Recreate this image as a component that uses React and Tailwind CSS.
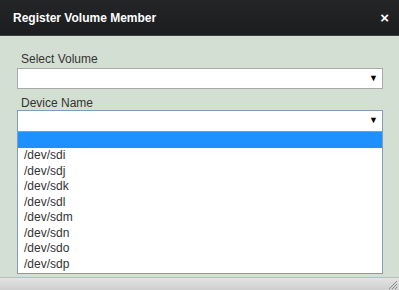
export default function App() {
  const items = ['/dev/sdi', '/dev/sdj', '/dev/sdk', '/dev/sdl', '/dev/sdm', '/dev/sdn', '/dev/sdo', '/dev/sdp'];

  return (
    <div className="w-[399px] h-[290px] overflow-hidden flex flex-col bg-[#d4dfd3] font-['Liberation_Sans',Arial,sans-serif]">
      <div className="h-[36px] shrink-0 flex items-center justify-between pl-[13px] pr-[10px] bg-gradient-to-b from-[#232527] to-[#1b1d1f] border-b border-[#3c3f41]">
        <span className="text-white font-bold text-[12px]">Register Volume Member</span>
        <span className="text-white font-bold text-[15px] leading-none">×</span>
      </div>

      <div className="flex-1 flex flex-col pl-[17px] pr-[16px] pt-[16px]">
        <label className="text-[12px] text-[#333] leading-[14px] pl-[4px]">Select Volume</label>
        <div className="mt-[2px] h-[21px] bg-white border border-[#a9a9a9] flex items-center justify-end pr-[4px]">
          <span className="text-[9px] text-black">▼</span>
        </div>

        <label className="mt-[7px] text-[12px] text-[#333] leading-[14px] pl-[4px]">Device Name</label>
        <div className="border border-[#7f9db9] bg-white">
          <div className="h-[21px] flex items-center justify-end pr-[4px] border-b border-[#7f9db9]">
            <span className="text-[9px] text-black">▼</span>
          </div>
          <div className="h-[16px] bg-[#1e90ff]"></div>
          <div className="pb-[1px]">
            {items.map((it) => (
              <div key={it} className="h-[15.5px] leading-[15.5px] text-[12px] text-[#333] pl-[6px]">{it}</div>
            ))}
          </div>
        </div>
      </div>

      <div className="h-[13px] shrink-0 mt-[3px] bg-gradient-to-b from-[#e4e4e4] to-[#cfcfcf] border-t border-[#bcbcbc] flex justify-end items-end">
        <svg width="12" height="12" viewBox="0 0 12 12" className="mr-[1px]">
          <path d="M11 3 L3 11 M11 6 L6 11 M11 9 L9 11" stroke="#8a8a8a" strokeWidth="1" />
        </svg>
      </div>
    </div>
  );
}
